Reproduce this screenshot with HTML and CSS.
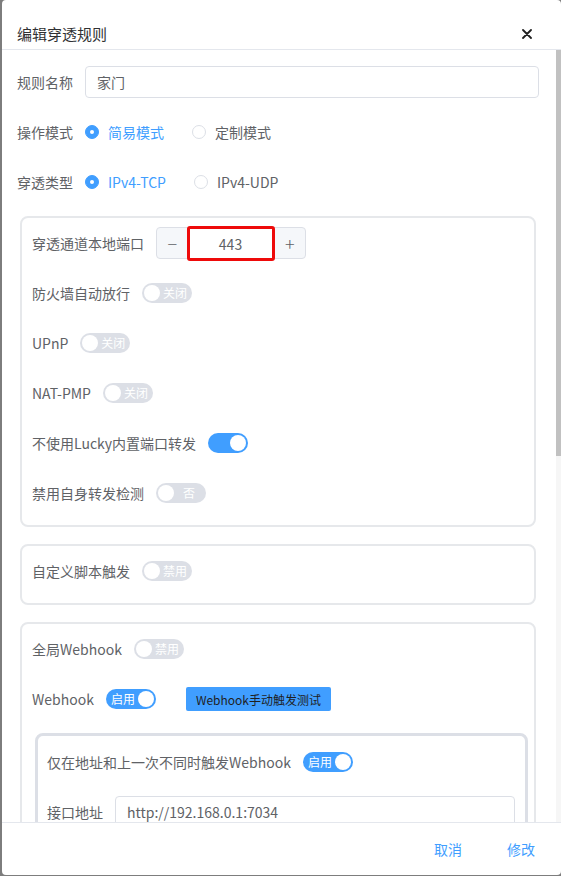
FILE: index.html
```html
<!DOCTYPE html>
<html lang="zh-CN">
<head>
    <meta charset="UTF-8">
    <meta name="viewport" content="width=device-width, initial-scale=1.0">
    <title>编辑穿透规则</title>
    <link rel="stylesheet" href="styles.css">
</head>
<body>

<div class="dialog">
    <div class="dialog-header">
        <span class="dialog-title">编辑穿透规则</span>
        <span class="dialog-close">
            <svg width="10" height="10" viewBox="0 0 10 10"><path d="M1 1L9 9M9 1L1 9" stroke="#1f1f1f" stroke-width="1.8" stroke-linecap="round"/></svg>
        </span>
    </div>

    <div class="dialog-main">
        <div class="dialog-body">
            <div class="form-item">
                <label class="form-label">规则名称</label>
                <input class="text-input" type="text" value="家门">
            </div>

            <div class="form-item">
                <label class="form-label">操作模式</label>
                <span class="radio checked"><span class="radio-dot"></span>简易模式</span>
                <span class="radio"><span class="radio-dot"></span>定制模式</span>
            </div>

            <div class="form-item">
                <label class="form-label">穿透类型</label>
                <span class="radio checked"><span class="radio-dot"></span>IPv4-TCP</span>
                <span class="radio"><span class="radio-dot"></span>IPv4-UDP</span>
            </div>

            <div class="card">
                <div class="form-item">
                    <label class="form-label">穿透通道本地端口</label>
                    <div class="number-input">
                        <span class="number-btn">&minus;</span>
                        <input class="number-field" type="text" value="443">
                        <span class="number-btn">+</span>
                    </div>
                </div>
                <div class="form-item">
                    <label class="form-label">防火墙自动放行</label>
                    <span class="switch"><span class="knob"></span><span class="switch-text">关闭</span></span>
                </div>
                <div class="form-item">
                    <label class="form-label">UPnP</label>
                    <span class="switch"><span class="knob"></span><span class="switch-text">关闭</span></span>
                </div>
                <div class="form-item">
                    <label class="form-label">NAT-PMP</label>
                    <span class="switch"><span class="knob"></span><span class="switch-text">关闭</span></span>
                </div>
                <div class="form-item">
                    <label class="form-label">不使用Lucky内置端口转发</label>
                    <span class="switch on plain"><span class="knob"></span></span>
                </div>
                <div class="form-item">
                    <label class="form-label">禁用自身转发检测</label>
                    <span class="switch"><span class="knob"></span><span class="switch-text">否</span></span>
                </div>
            </div>

            <div class="card">
                <div class="form-item">
                    <label class="form-label">自定义脚本触发</label>
                    <span class="switch"><span class="knob"></span><span class="switch-text">禁用</span></span>
                </div>
            </div>

            <div class="card">
                <div class="form-item">
                    <label class="form-label">全局Webhook</label>
                    <span class="switch"><span class="knob"></span><span class="switch-text">禁用</span></span>
                </div>
                <div class="form-item">
                    <label class="form-label">Webhook</label>
                    <span class="switch on"><span class="switch-text">启用</span><span class="knob"></span></span>
                    <button class="test-btn" type="button">Webhook手动触发测试</button>
                </div>

                <div class="inner-card">
                    <div class="form-item">
                        <label class="form-label">仅在地址和上一次不同时触发Webhook</label>
                        <span class="switch on"><span class="switch-text">启用</span><span class="knob"></span></span>
                    </div>
                    <div class="form-item">
                        <label class="form-label">接口地址</label>
                        <input class="text-input" type="text" value="http://192.168.0.1:7034">
                    </div>
                </div>
            </div>
        </div>

        <div class="scrollbar">
            <div class="scrollbar-thumb"></div>
        </div>
    </div>

    <div class="dialog-footer">
        <button class="text-btn" type="button">取消</button>
        <button class="text-btn" type="button">修改</button>
    </div>
</div>

</body>
</html>
```

FILE: styles.css
```css
body {
    margin: 0;
    background-color: #7d7d7d;
    font-family: "Noto Sans CJK SC", "Noto Sans", sans-serif;
    font-size: 14px;
    color: #606266;
    overflow: hidden;
}
.dialog {
    margin-left: 2px;
    width: 559px;
    height: 875px;
    background-color: white;
    border-radius: 4px;
    display: flex;
    flex-direction: column;
    overflow: hidden;
}
.dialog-header {
    height: 50px;
    box-sizing: border-box;
    padding: 18px 29px 0 15px;
    border-bottom: 1px solid #e4e7ed;
    display: flex;
    justify-content: space-between;
    align-items: center;
    flex-shrink: 0;
}
.dialog-title {
    font-size: 15px;
    color: #303133;
}
.dialog-close {
    display: flex;
}
.dialog-main {
    flex: 1;
    display: flex;
    overflow: hidden;
}
.dialog-body {
    flex: 1;
    overflow: hidden;
    padding: 16px 17px 0 15px;
}
.scrollbar {
    width: 5px;
    flex-shrink: 0;
    background-color: #f6f6f6;
}
.scrollbar-thumb {
    height: 406px;
    background-color: #c1c1c1;
}
.dialog-footer {
    height: 52px;
    flex-shrink: 0;
    border-top: 1px solid #e4e7ed;
    display: flex;
    justify-content: flex-end;
    align-items: center;
    gap: 45px;
    padding: 0 26px 0 0;
}
.text-btn {
    border: none;
    background: none;
    padding: 0;
    font-family: inherit;
    font-size: 14px;
    color: #409eff;
    cursor: pointer;
}

/* form rows */
.form-item {
    display: flex;
    align-items: center;
    height: 32px;
    margin-bottom: 18px;
}
.form-label {
    margin-right: 12px;
    white-space: nowrap;
    line-height: 32px;
}
.text-input {
    flex: 1;
    height: 32px;
    box-sizing: border-box;
    border: 1px solid #dcdfe6;
    border-radius: 4px;
    padding: 0 11px;
    font-family: inherit;
    font-size: 14px;
    color: #606266;
    outline: none;
}

/* radio */
.radio {
    display: flex;
    align-items: center;
    margin-right: 28px;
    cursor: pointer;
}
.radio-dot {
    width: 14px;
    height: 14px;
    box-sizing: border-box;
    border: 1px solid #dcdfe6;
    border-radius: 50%;
    margin-right: 9px;
    display: flex;
    justify-content: center;
    align-items: center;
}
.radio.checked {
    color: #409eff;
}
.radio.checked .radio-dot {
    background-color: #409eff;
    border-color: #409eff;
}
.radio.checked .radio-dot::after {
    content: "";
    width: 4px;
    height: 4px;
    border-radius: 50%;
    background-color: white;
}

/* cards */
.card {
    border: 2px solid #e6e8eb;
    border-radius: 8px;
    margin: 0 3px 17px 3px;
    padding: 9px 4px 0 10px;
}
.card > .form-item:last-child {
    margin-bottom: 16px;
}
.inner-card {
    border: 3px solid #dcdfe6;
    border-radius: 8px;
    margin: 1px 2px 18px 3px;
    padding: 10px 10px 0 9px;
}

/* number input */
.number-input {
    display: flex;
    width: 150px;
    height: 32px;
    box-sizing: border-box;
    border: 1px solid #dcdfe6;
    border-radius: 4px;
    background-color: #f5f7fa;
}
.number-btn {
    width: 31px;
    display: flex;
    justify-content: center;
    align-items: center;
    font-size: 18px;
    font-weight: 300;
    color: #606266;
}
.number-field {
    width: 88px;
    height: 35px;
    margin: -2px 0 0 -1px;
    box-sizing: border-box;
    border: 3px solid #ee0a0a;
    border-radius: 3px;
    text-align: center;
    font-family: inherit;
    font-size: 14px;
    color: #606266;
    background-color: white;
    outline: none;
}

/* switch */
.switch {
    display: inline-flex;
    align-items: center;
    height: 20px;
    min-width: 40px;
    box-sizing: border-box;
    padding: 0 5px 0 2px;
    border-radius: 10px;
    background-color: #dcdfe6;
    gap: 3px;
}
.switch.on {
    background-color: #409eff;
    padding: 0 2px 0 5px;
}
.switch.plain {
    justify-content: flex-end;
}
.knob {
    width: 16px;
    height: 16px;
    border-radius: 50%;
    background-color: white;
}
.switch-text {
    font-size: 12px;
    line-height: 20px;
    color: white;
    min-width: 24px;
    text-align: center;
}
.test-btn {
    margin-left: 30px;
    height: 24px;
    padding: 0 10px;
    border: none;
    border-radius: 2px;
    background-color: #409eff;
    color: #1f1f1f;
    font-family: inherit;
    font-size: 12px;
    cursor: pointer;
}
```
